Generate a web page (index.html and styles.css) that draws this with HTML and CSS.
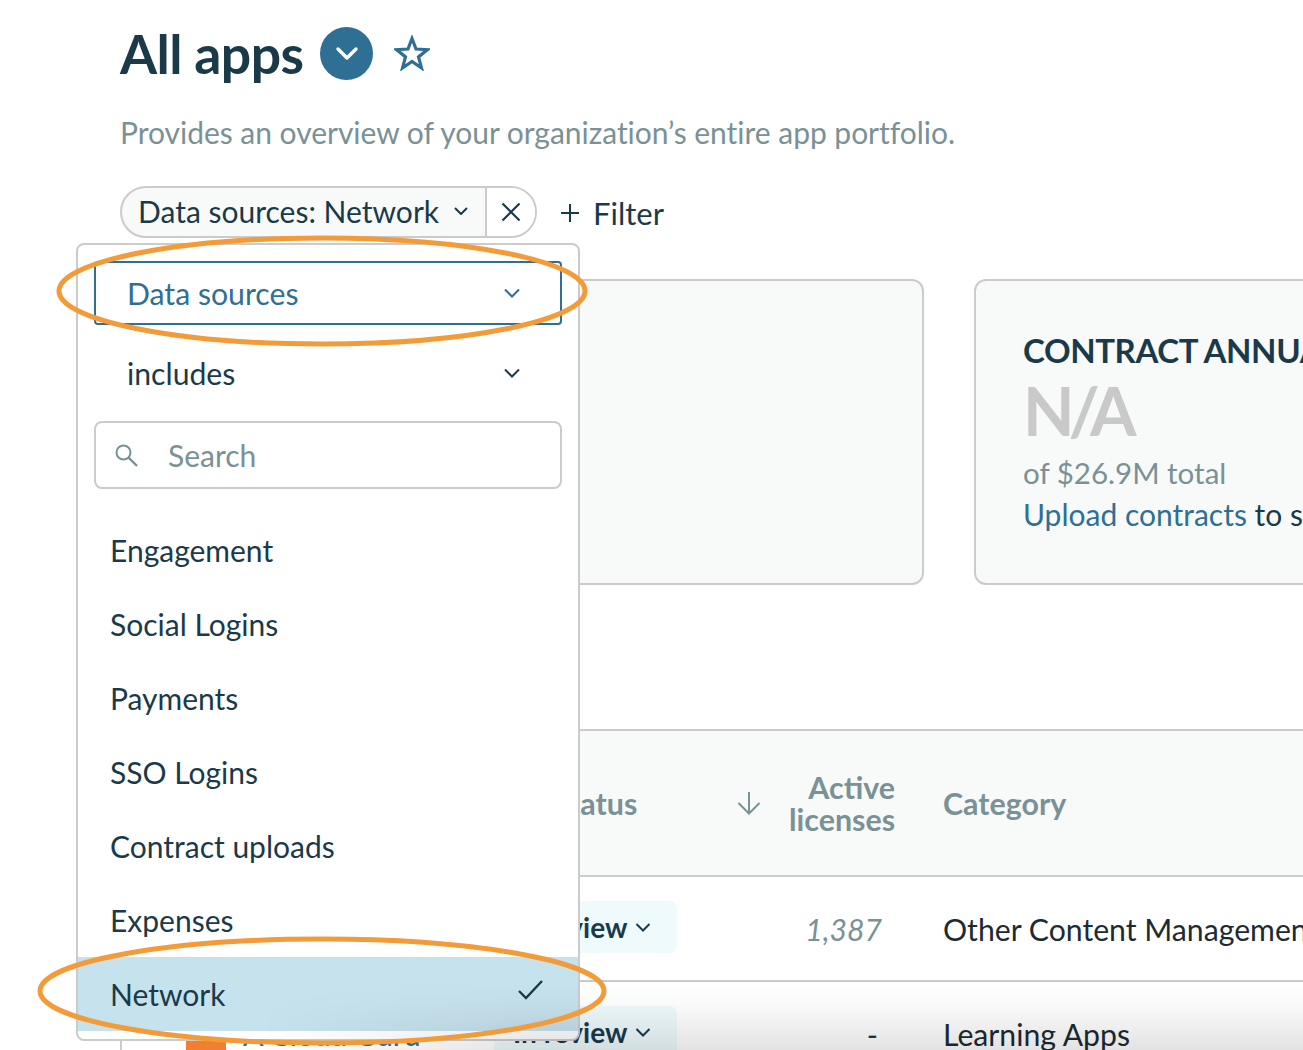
FILE: index.html
```html
<!DOCTYPE html>
<html lang="en">
<head>
<meta charset="utf-8">
<title>All apps</title>
<link rel="stylesheet" href="styles.css">
</head>
<body>
<div class="page">
  <main class="main">
    <header class="title-row">
      <h1 class="title">All apps</h1>
      <span class="title-btn"><svg width="28" height="28" viewBox="0 0 28 28"><path d="M5 10l9 9 9-9" fill="none" stroke="#fff" stroke-width="3.4" stroke-linecap="round" stroke-linejoin="round"/></svg></span>
      <svg class="star" width="36" height="36" viewBox="0 0 36 36"><path d="M18 3.500l4 10.500 11.500.6-9 7.300 3 11.100L18 26.500 8.500 33l3-11.100-9-7.300L14 14z" fill="none" stroke="#2f6f94" stroke-width="3.200" stroke-linejoin="miter"/></svg>
    </header>
    <p class="subtitle">Provides an overview of your organization’s entire app portfolio.</p>
    <div class="filters">
      <div class="chip">
        <span class="chip-main">Data sources: Network
          <svg class="chev-s" width="16" height="16" viewBox="0 0 16 16"><path d="M2.500 5.500 8 11l5.500-5.500" fill="none" stroke="#1a3a4a" stroke-width="2" stroke-linecap="round" stroke-linejoin="round"/></svg>
        </span>
        <span class="chip-x"><svg width="20" height="20" viewBox="0 0 20 20"><path d="M1.500 1.500l17 17M18.500 1.500l-17 17" fill="none" stroke="#1a3a4a" stroke-width="2.200"/></svg></span>
      </div>
      <span class="add-filter"><svg width="20" height="20" viewBox="0 0 20 20"><path d="M10 1v18M1 10h18" fill="none" stroke="#1a3a4a" stroke-width="2"/></svg>Filter</span>
    </div>
    <section class="cards">
      <div class="card card-first"></div>
      <div class="card card-second">
        <div class="card-label">CONTRACT ANNUAL VALUE</div>
        <div class="card-value">N/A</div>
        <div class="card-note">of $26.9M total</div>
        <div class="card-line"><a class="link">Upload contracts</a> to show contract value</div>
      </div>
    </section>
    <section class="table">
      <div class="row head">
        <div class="c-name"></div>
        <div class="c-status">Status</div>
        <div class="c-sort"><svg width="24" height="24" viewBox="0 0 24 24"><path d="M12 1v21M1.500 12 12 22.500 22.500 12" fill="none" stroke="#7a9196" stroke-width="2"/></svg></div>
        <div class="c-lic">Active<br>licenses</div>
        <div class="c-cat">Category</div>
      </div>
      <div class="row body">
        <div class="c-name"></div>
        <div class="c-status"><span class="pill">In review<svg width="16" height="16" viewBox="0 0 16 16"><path d="M1.500 5 8 11.500 14.500 5" fill="none" stroke="#1a3a4a" stroke-width="2"/></svg></span></div>
        <div class="c-sort"></div>
        <div class="c-lic num">1,387</div>
        <div class="c-cat val">Other Content Management</div>
      </div>
      <div class="row body">
        <div class="c-name name-cell"><span class="logo"></span>A Cloud Guru</div>
        <div class="c-status"><span class="pill">In review<svg width="16" height="16" viewBox="0 0 16 16"><path d="M1.500 5 8 11.500 14.500 5" fill="none" stroke="#1a3a4a" stroke-width="2"/></svg></span></div>
        <div class="c-sort"></div>
        <div class="c-lic dash">-</div>
        <div class="c-cat val">Learning Apps</div>
      </div>
    </section>
  </main>

  <div class="menu">
    <div class="select select-active">Data sources
      <svg width="18" height="18" viewBox="0 0 18 18"><path d="M2 5.500 9 12.500l7-7" fill="none" stroke="#2f6f94" stroke-width="2"/></svg>
    </div>
    <div class="select select-plain">includes
      <svg width="18" height="18" viewBox="0 0 18 18"><path d="M2 5.500 9 12.500l7-7" fill="none" stroke="#1a3a4a" stroke-width="2"/></svg>
    </div>
    <div class="search">
      <svg width="24" height="24" viewBox="0 0 24 24"><circle cx="9.500" cy="9.500" r="7" fill="none" stroke="#7a9196" stroke-width="2"/><path d="M14.500 14.500 23 23" fill="none" stroke="#7a9196" stroke-width="2.400"/></svg>
      <span>Search</span>
    </div>
    <ul class="options">
      <li>Engagement</li>
      <li>Social Logins</li>
      <li>Payments</li>
      <li>SSO Logins</li>
      <li>Contract uploads</li>
      <li>Expenses</li>
      <li class="selected">Network
        <svg class="check" width="26" height="22" viewBox="0 0 26 22"><path d="M1 12l7 7L24 2" fill="none" stroke="#1a3a4a" stroke-width="2.400"/></svg>
      </li>
    </ul>
  </div>

  <div class="fade"></div>

  <svg class="annotations" width="1303" height="1050" viewBox="0 0 1303 1050">
    <ellipse cx="322" cy="291" rx="263" ry="53" />
    <ellipse cx="322" cy="991" rx="282" ry="52" />
  </svg>
</div>
</body>
</html>
```

FILE: styles.css
```css
* { box-sizing: border-box; }
html, body { margin: 0; padding: 0; background: #fff; }
body { font-family: Lato, "Liberation Sans", sans-serif; color: #1a3a4a; }
.page { position: relative; width: 1303px; height: 1050px; overflow: hidden; background: #fff; }

.main { padding: 26px 0 0 120px; width: 1600px; }
.title-row { display: flex; align-items: center; height: 54px; }
.title { margin: 0; font-size: 53.5px; line-height: 54px; font-weight: 700; letter-spacing: -0.6px; color: #1a3a4a; }
.title-btn { width: 53px; height: 53px; border-radius: 50%; background: #2f6f94; margin-left: 17px; display: flex; align-items: center; justify-content: center; }
.star { margin-left: 21px; }
.subtitle { margin: 33px 0 0; font-size: 30px; line-height: 38px; color: #7a9196; letter-spacing: -0.03px; }

.filters { display: flex; align-items: center; margin-top: 35px; height: 52px; }
.chip { display: flex; height: 52px; border: 2px solid #cbcbcb; border-radius: 26px; background: #f8faf9; font-size: 30px; overflow: hidden; }
.chip-main { display: flex; align-items: center; padding: 0 16px 2px; gap: 14px; border-right: 2px solid #cbcbcb; white-space: nowrap; }
.chip-x { display: flex; align-items: center; width: 48px; justify-content: center; background: #fff; }
.add-filter { display: flex; align-items: center; gap: 13px; margin: 1px 0 0 23px; font-size: 31px; }

.cards { display: flex; gap: 50px; margin-top: 41px; }
.card { flex: none; height: 306px; border: 2px solid #cbcbcb; border-radius: 12px; background: #f8faf9; }
.card-first { width: 804px; }
.card-second { width: 560px; padding: 49px 0 0 47px; white-space: nowrap; }
.card-label { font-size: 33px; line-height: 40px; font-weight: 700; letter-spacing: -0.4px; }
.card-value { margin-top: 8px; font-size: 67px; line-height: 64px; font-weight: 700; color: #c9c9c9; letter-spacing: -6px; }
.card-note { font-size: 29.5px; line-height: 40px; color: #7a9196; margin-top: 11px; }
.card-line { font-size: 30px; line-height: 40px; margin-top: 1px; }
.link { color: #2f6f94; }

.table { margin-top: 144px; border-top: 2px solid #cbcbcb; border-left: 2px solid #cbcbcb; }
.row { display: grid; grid-template-columns: 370px 245px 50px 108px 1fr; align-items: center; }
.head { height: 146px; background: #f8faf9; border-bottom: 2px solid #cbcbcb; color: #7a9196; font-size: 30.4px; line-height: 32px; font-weight: 700; }
.body { height: 105px; border-bottom: 2px solid #cbcbcb; font-size: 30.2px; }
.head .c-status { padding-left: 61px; }
.c-lic { text-align: right; }
.c-cat { padding-left: 48px; white-space: nowrap; }
.c-sort { display: flex; justify-content: flex-start; }
.pill { display: inline-flex; align-items: center; gap: 8px; height: 52px; margin: 0 0 4px 2px; padding: 0 26px 0 19px; border-radius: 8px; background: #eefafc; font-size: 28px; font-weight: 700; white-space: nowrap; }
.num { font-style: italic; color: #7a9196; padding-right: 13px; }
.dash { padding-right: 17px; }
.val { color: #1c2b33; }
.name-cell { display: flex; align-items: center; gap: 17px; padding-left: 64px; white-space: nowrap; color: #2f6f94; font-weight: 500; letter-spacing: -0.2px; }
.logo { width: 40px; height: 40px; background: #f0802f; flex: none; }

.menu { position: absolute; left: 76px; top: 243px; width: 504px; height: 798px; background: #fff; border: 2px solid #cbcbcb; border-radius: 8px; padding-top: 16px; }
.select { display: flex; align-items: center; justify-content: space-between; margin: 0 16px; padding: 0 39px 0 31px; font-size: 30.2px; }
.select svg { flex: none; }
.select-active { height: 64px; border: 2px solid #2f6f94; border-radius: 4px; color: #2f6f94; }
.select-plain { height: 64px; margin-top: 16px; border: 2px solid transparent; }
.search { display: flex; align-items: center; gap: 30px; height: 68px; margin: 16px 16px 0; padding-left: 18px; border: 2px solid #cbcbcb; border-radius: 8px; font-size: 30px; color: #7a9196; }
.options { list-style: none; margin: 24px 0 0; padding: 0; font-size: 30px; }
.options li { display: flex; align-items: center; justify-content: space-between; height: 74px; padding: 0 34px 0 32px; }
.options .selected { background: #c6e2ed; }
.check { margin-bottom: 8px; }

.fade { position: absolute; left: 78px; right: 0; bottom: 0; height: 68px; background: linear-gradient(to bottom, rgba(0,0,0,0), rgba(0,0,0,0.015) 30%, rgba(0,0,0,0.11)); -webkit-mask-image: linear-gradient(to right, transparent 180px, #000 460px); mask-image: linear-gradient(to right, transparent 180px, #000 460px); pointer-events: none; }
.annotations { position: absolute; left: 0; top: 0; pointer-events: none; }
.annotations ellipse { fill: none; stroke: #f29b38; stroke-width: 5; }
```
